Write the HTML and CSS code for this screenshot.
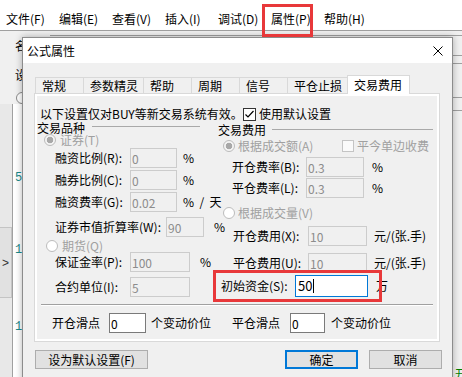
FILE: index.html
```html
<!DOCTYPE html>
<html lang="zh-CN">
<head>
    <meta charset="UTF-8">
    <meta name="viewport" content="width=device-width, initial-scale=1.0">
    <title>公式属性</title>
    <link rel="stylesheet" href="styles.css">
</head>
<body>
    <!-- Barre de menu de la fenêtre principale -->
    <div class="menubar">
        <span>文件(F)</span>
        <span>编辑(E)</span>
        <span>查看(V)</span>
        <span>插入(I)</span>
        <span>调试(D)</span>
        <span>属性(P)</span>
        <span>帮助(H)</span>
    </div>

    <!-- Fenêtre principale, derrière la boîte de dialogue -->
    <div class="desk">
        <div class="desk-rule"></div>
        <div class="desk-row">
            <div class="lp">
                <div class="lp-head">
                    <span class="lp-char">名</span>
                    <span class="lp-char lp-char2">设</span>
                    <span class="lp-radio"></span>
                </div>
                <div class="lp-main">
                    <div class="lp-rail"><button class="expander">&gt;</button></div>
                    <div class="lp-code">
                        <span class="ln">5</span>
                        <span class="ln ln2">1</span>
                        <span class="ln ln3">1</span>
                    </div>
                </div>
            </div>
            <div class="rp">
                <i class="rp-l l1"></i>
                <i class="rp-l l2"></i>
                <i class="rp-l l3"></i>
                <i class="rp-l l4"></i>
                <span class="rp-txt">开</span>
            </div>
        </div>
    </div>

    <!-- Boîte de dialogue -->
    <div class="dialog">
        <div class="titlebar">
            <span>公式属性</span>
            <svg class="close" width="10" height="10" viewBox="0 0 10 10">
                <path d="M0.5 0.5L9.5 9.5M9.5 0.5L0.5 9.5" stroke="#000" stroke-width="1" fill="none"/>
            </svg>
        </div>
        <div class="dlg-body">
            <div class="tabs">
                <span class="tab short">常规</span>
                <span class="tab long">参数精灵</span>
                <span class="tab short">帮助</span>
                <span class="tab short">周期</span>
                <span class="tab short">信号</span>
                <span class="tab long">平仓止损</span>
                <span class="tab active">交易费用</span>
            </div>
            <div class="panel">
                <div class="page">
                    <div class="notice">
                        <span class="notice-text">以下设置仅对BUY等新交易系统有效。</span>
                        <svg class="check" width="13" height="13" viewBox="0 0 13 13">
                            <rect x="0.5" y="0.5" width="12" height="12" fill="#fff" stroke="#333"/>
                            <path d="M2.5 6.5L5 9L10.5 3" fill="none" stroke="#000" stroke-width="1.2"/>
                        </svg>
                        <span class="check-label">使用默认设置</span>
                    </div>

                    <div class="groups">
                        <div class="grp grp-left">
                            <div class="grp-head"><span>交易品种</span><i class="grp-rule"></i></div>
                            <div class="opt opt-stock"><span class="radio on"></span><span class="dim">证券(T)</span></div>
                            <div class="field f-l"><span class="lbl lbl-75">融资比例(R):</span><input class="box w47" value="0" disabled><span class="unit u6">%</span></div>
                            <div class="field f-l"><span class="lbl lbl-75">融券比例(C):</span><input class="box w47" value="0" disabled><span class="unit u6">%</span></div>
                            <div class="field f-l"><span class="lbl lbl-75">融资费率(G):</span><input class="box w47" value="0.02" disabled><span class="unit u6">%  /  天</span></div>
                            <div class="field f-l gap5"><span class="lbl lbl-111">证券市值折算率(W):</span><input class="box w38" value="90" disabled><span class="unit u10">%</span></div>
                            <div class="opt opt-fut"><span class="radio"></span><span class="dim">期货(Q)</span></div>
                            <div class="field f-l gap0"><span class="lbl lbl-75">保证金率(P):</span><input class="box w60" value="100" disabled><span class="unit u10">%</span></div>
                            <div class="field f-l gap5"><span class="lbl lbl-75">合约单位(I):</span><input class="box w60" value="5" disabled></div>
                        </div>

                        <div class="grp grp-right">
                            <div class="grp-head head-r"><span>交易费用</span><i class="grp-rule"></i></div>
                            <div class="opt opt-amt">
                                <span class="opt-main"><span class="radio on"></span><span class="dim">根据成交额(A)</span></span>
                                <span class="checkbox"></span><span class="dim check-label">平今单边收费</span>
                            </div>
                            <div class="field f-r1"><span class="lbl lbl-74">开仓费率(B):</span><input class="box w58" value="0.3" disabled><span class="unit u8">%</span></div>
                            <div class="field f-r1 gap1"><span class="lbl lbl-74">平仓费率(L):</span><input class="box w58" value="0.3" disabled><span class="unit u8">%</span></div>
                            <div class="opt opt-vol"><span class="radio"></span><span class="dim">根据成交量(V)</span></div>
                            <div class="field f-r2"><span class="lbl lbl-75">开仓费用(X):</span><input class="box w59" value="10" disabled><span class="unit u7">元/(张.手)</span></div>
                            <div class="field f-r2"><span class="lbl lbl-75">平仓费用(U):</span><input class="box w59" value="10" disabled><span class="unit u7">元/(张.手)</span></div>
                            <div class="field f-cash"><span class="lbl lbl-74">初始资金(S):</span><div class="box cash"><span>50</span><i class="caret"></i></div><span class="unit u8">万</span></div>
                        </div>
                    </div>

                    <div class="sep"></div>

                    <div class="slip">
                        <span>开仓滑点</span>
                        <input class="box live w37 s-in1" value="0">
                        <span class="s-txt1">个变动价位</span>
                        <span class="s-lbl2">平仓滑点</span>
                        <input class="box live w35 s-in2" value="0">
                        <span class="s-txt2">个变动价位</span>
                    </div>
                </div>
            </div>

            <div class="buttons">
                <button class="btn btn-default">设为默认设置(F)</button>
                <button class="btn btn-ok">确定</button>
                <button class="btn btn-cancel">取消</button>
            </div>
        </div>
    </div>

    <!-- Cadres rouges d'annotation -->
    <div class="mark mark-menu"></div>
    <div class="mark mark-cash"></div>
</body>
</html>
```

FILE: styles.css
```css
* {
    box-sizing: border-box;
}

body {
    margin: 0;
    width: 462px;
    height: 377px;
    overflow: hidden;
    position: relative;
    background-color: #f0f0f0;
    font-family: "Noto Sans CJK SC", sans-serif;
    font-size: 12px;
    line-height: 14px;
    color: #000;
}

/* Barre de menu */
.menubar {
    height: 31px;
    padding: 8px 0 0 6px;
    display: flex;
    align-items: center;
    background-color: #fff;
    border-bottom: 1px solid #a0a0a0;
}

.menubar span {
    width: 53px;
    white-space: nowrap;
}

/* Fenêtre derrière */
.desk {
    height: 346px;
    display: flex;
    flex-direction: column;
}

.desk-rule {
    margin: 4px 0 0 50px;
    border-top: 1px solid #a0a0a0;
}

.desk-row {
    flex: 1;
    display: flex;
    justify-content: space-between;
}

.lp {
    width: 22px;
    display: flex;
    flex-direction: column;
}

.lp-head {
    height: 68px;
    padding-left: 15px;
    display: flex;
    flex-direction: column;
    align-items: flex-start;
}

.lp-char {
    line-height: 12px;
    margin-top: 4px;
    white-space: nowrap;
}

.lp-char2 {
    margin-top: 17px;
}

.lp-radio {
    width: 12px;
    height: 12px;
    margin: 11px 0 0 1px;
    border: 1px solid #8a8a8a;
    border-radius: 50%;
    background-color: #fff;
    flex: none;
}

.lp-main {
    flex: 1;
    display: flex;
}

.lp-rail {
    width: 16px;
    padding-top: 123px;
    background-color: #e8e8e8;
}

.expander {
    display: block;
    width: 12px;
    height: 71px;
    padding: 0;
    border: 1px solid #c4c4c4;
    border-left: none;
    background-color: #e1e1e1;
    font-family: "Liberation Sans", sans-serif;
    font-size: 12px;
    color: #333;
}

.lp-code {
    flex: 1;
    padding-left: 2px;
    display: flex;
    flex-direction: column;
    background-color: #fff;
    border-left: 1px solid #a0a0a0;
    font-family: "Liberation Mono", monospace;
    line-height: 12px;
    color: #1a8a8a;
}

.ln {
    margin-top: 68px;
}

.ln2 {
    margin-top: 60px;
}

.ln3 {
    margin-top: 65px;
}

.rp {
    width: 9px;
    display: flex;
    flex-direction: column;
}

.rp-l {
    border-top: 1px solid #a0a0a0;
}

.l1 { margin-top: 19px; }
.l2 { margin-top: 7px; }
.l3 { margin-top: 33px; }
.l4 { margin-top: 12px; }

.rp-txt {
    margin: auto 0 -3px 0;
    padding-left: 2px;
    line-height: 12px;
    color: #008000;
    white-space: nowrap;
}

/* Boîte de dialogue */
.dialog {
    position: absolute;
    left: 22px;
    top: 37px;
    width: 431px;
    height: 352px;
    background-color: #f0f0f0;
    border: 1px solid #8c8c8c;
    box-shadow: 0 0 7px rgba(0, 0, 0, 0.3);
}

.titlebar {
    height: 25px;
    padding: 0 9px 0 4px;
    display: flex;
    align-items: center;
    justify-content: space-between;
    background-color: #fff;
}

.dlg-body {
    padding: 12px 12px 0 11px;
}

.tabs {
    height: 18px;
    padding-left: 1px;
    display: flex;
    align-items: flex-end;
}

.tab {
    height: 16px;
    margin-right: -1px;
    padding-left: 6px;
    border: 1px solid #d9d9d9;
    border-bottom: none;
    background-color: #f0f0f0;
    line-height: 15px;
    white-space: nowrap;
}

.tab.short {
    width: 49px;
}

.tab.long {
    width: 61px;
}

.tab.active {
    width: 63px;
    height: 19px;
    margin-bottom: -1px;
    position: relative;
    z-index: 1;
    background-color: #fff;
    line-height: 17px;
}

.panel {
    height: 249px;
    padding: 2px;
    border: 1px solid #d9d9d9;
    background-color: #fff;
}

.page {
    height: 100%;
    display: flex;
    flex-direction: column;
    background-color: #f0f0f0;
}

.notice {
    height: 14px;
    margin-top: 11px;
    padding-left: 3px;
    display: flex;
    align-items: center;
}

.notice-text {
    width: 203px;
    white-space: nowrap;
}

.check-label {
    margin-left: 3px;
    white-space: nowrap;
}

.groups {
    display: flex;
}

.grp {
    display: flex;
    flex-direction: column;
    align-items: flex-start;
}

.grp-left {
    width: 181px;
}

.grp-right {
    flex: 1;
}

.grp-head {
    height: 13px;
    display: flex;
    align-items: flex-start;
    line-height: 13px;
}

.grp-rule {
    width: 108px;
    margin: 5px 0 0 7px;
    border-top: 1px solid #a9a9a9;
}

.head-r {
    margin-top: 2px;
}

.head-r .grp-rule {
    width: 161px;
    margin: 6px 0 0 6px;
}

/* Boutons radio et cases */
.opt {
    height: 12px;
    display: flex;
    align-items: center;
    white-space: nowrap;
}

.opt .radio + span {
    margin-left: 4px;
}

.radio {
    width: 12px;
    height: 12px;
    flex: none;
    border: 1px solid #bcbcbc;
    border-radius: 50%;
    background-color: #fff;
}

.radio.on {
    background: radial-gradient(circle, #a8a8a8 0 3px, #f4f4f4 3.6px);
}

.checkbox {
    width: 12px;
    height: 12px;
    flex: none;
    border: 1px solid #c4c4c4;
    background-color: #fafafa;
}

.dim {
    color: #a0a0a0;
}

.opt-stock {
    margin-left: 7px;
}

.opt-fut {
    margin: 3px 0 0 9px;
}

.opt-amt {
    margin: 4px 0 0 5px;
}

.opt-main {
    width: 119px;
    display: flex;
    align-items: center;
}

.opt-amt .radio + span {
    margin-left: 3px;
}

.opt-vol {
    margin: 9px 0 0 5px;
}

.opt-vol .radio + span {
    margin-left: 3px;
}

/* Champs de saisie */
.field {
    height: 20px;
    display: flex;
    align-items: center;
    white-space: nowrap;
}

.lbl {
    flex: none;
}

.lbl-74 { width: 74px; }
.lbl-75 { width: 75px; }
.lbl-111 { width: 111px; }

.box {
    height: 20px;
    margin: 0;
    padding: 0 1px;
    flex: none;
    border: 1px solid #cccccc;
    background-color: #f0f0f0;
    font-family: "Noto Sans CJK SC", sans-serif;
    font-size: 12px;
    color: #8c8c8c;
    outline: none;
}

.box.live {
    background-color: #fff;
    border-color: #7a7a7a;
    color: #000;
}

.w35 { width: 35px; }
.w37 { width: 37px; }
.w38 { width: 38px; }
.w47 { width: 47px; }
.w58 { width: 58px; }
.w59 { width: 59px; }
.w60 { width: 60px; }
.w73 { width: 73px; }

.unit {
    white-space: pre;
}

.u6 { margin-left: 6px; }
.u7 { margin-left: 7px; }
.u8 { margin-left: 8px; }
.u10 { margin-left: 10px; }

.f-l {
    margin: 2px 0 0 18px;
}

.gap0 {
    margin-top: 0;
}

.gap5 {
    margin-top: 5px;
}

.f-r1 {
    margin: 5px 0 0 14px;
}

.f-r1.gap1 {
    margin-top: 1px;
}

.f-r2 {
    margin: 7px 0 0 15px;
}

.f-cash {
    height: 22px;
    margin: 2px 0 0 3px;
}

.cash {
    width: 73px;
    height: 22px;
    padding-left: 2px;
    display: flex;
    align-items: center;
    background-color: #fff;
    border-color: #0078d7;
    color: #000;
    font-size: 13px;
}

.caret {
    width: 1px;
    height: 14px;
    margin-left: 1px;
    background-color: #000;
}

.sep {
    width: 392px;
    margin: 7px 0 0 4px;
    border-top: 1px solid #a0a0a0;
    border-bottom: 1px solid #fff;
}

.slip {
    height: 20px;
    margin: 7px 0 0 15px;
    display: flex;
    align-items: center;
    white-space: nowrap;
}

.s-in1 { margin-left: 9px; }
.s-txt1 { margin-left: 5px; }
.s-lbl2 { margin-left: 21px; }
.s-in2 { margin-left: 10px; }
.s-txt2 { margin-left: 6px; }

/* Boutons */
.buttons {
    margin: 8px -2px 0 1px;
    display: flex;
}

.btn {
    height: 19px;
    padding: 0;
    border: 1px solid #adadad;
    background-color: #e1e1e1;
    font-family: "Noto Sans CJK SC", sans-serif;
    font-size: 12px;
    line-height: 16px;
    color: #000;
}

.btn-default {
    width: 113px;
}

.btn-ok {
    width: 73px;
    margin-left: auto;
    border: 2px solid #0078d7;
}

.btn-cancel {
    width: 73px;
    margin-left: 11px;
}

/* Annotations */
.mark {
    position: absolute;
    z-index: 5;
    border: 3px solid #e8383a;
}

.mark-menu {
    left: 262px;
    top: 4px;
    width: 51px;
    height: 33px;
}

.mark-cash {
    left: 213px;
    top: 270px;
    width: 169px;
    height: 32px;
}
```
